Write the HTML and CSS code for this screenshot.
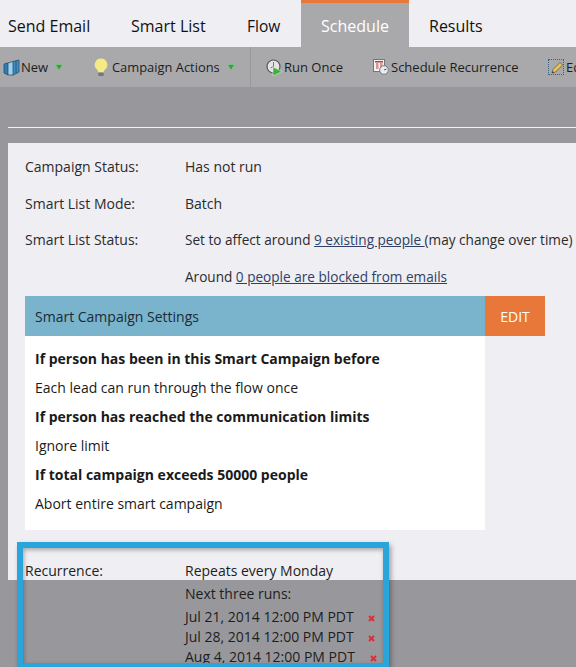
FILE: index.html
```html
<!DOCTYPE html>
<html lang="en">
<head>
    <meta charset="UTF-8">
    <title>Schedule</title>
    <link rel="stylesheet" href="styles.css">
</head>
<body>
    <div class="tabs">
        <div class="tab tab-email">Send Email</div>
        <div class="tab tab-list">Smart List</div>
        <div class="tab tab-flow">Flow</div>
        <div class="tab tab-active">Schedule</div>
        <div class="tab tab-results">Results</div>
    </div>
    <div class="toolbar">
        <div class="tool tool-new">
            <svg width="17" height="17" viewBox="0 0 17 17"><path d="M1 5l4-1v12l-4-2z" fill="#2f7fb5"/><path d="M5 4l5-1.500v13.500h-5z" fill="#a5d0ea"/><path d="M10 2.500l6-1.500v12l-6 3z" fill="#3f8fc4"/><path d="M1 5l4-1 5-1.500 6-1.500v12l-6 3h-5l-4-2zM5 4v12M10 2.500v14M13 2v12.500" stroke="#1c4463" stroke-width=".7" fill="none"/></svg>
            <span>New</span>
            <svg class="arrow" width="8" height="7" viewBox="0 0 8 7"><path d="M.5.5h7l-3.500 6z" fill="#3f9a45" stroke="#86c98a" stroke-width=".7"/></svg>
        </div>
        <div class="tool tool-actions">
            <svg width="14" height="19" viewBox="0 0 14 19"><path d="M7 .5a6.300 6.300 0 0 0-3.800 11.300c1 .9 1 2 1 2.700h5.600c0-.7 0-1.800 1-2.700A6.300 6.300 0 0 0 7 .5z" fill="#f6ea84"/><rect x="4.200" y="14.500" width="5.600" height="3.500" rx="1" fill="#77777a"/></svg>
            <span>Campaign Actions</span>
            <svg class="arrow" width="8" height="7" viewBox="0 0 8 7"><path d="M.5.5h7l-3.500 6z" fill="#3f9a45" stroke="#86c98a" stroke-width=".7"/></svg>
        </div>
        <div class="tool tool-run">
            <svg width="17" height="17" viewBox="0 0 17 17"><circle cx="7.500" cy="7.500" r="6.500" fill="#e4e4e4" stroke="#58585c" stroke-width="1.200"/><path d="M7.500 3v4.500l-3 1.500" stroke="#77777a" fill="none"/><path d="M7 8l9 4.500-9 4.500z" fill="#3eb03a" stroke="#e8f4e4" stroke-width=".5"/></svg>
            <span>Run Once</span>
        </div>
        <div class="tool tool-recur">
            <svg width="16" height="16" viewBox="0 0 16 16"><rect x=".5" y=".5" width="11" height="12" fill="#f1f1f1" stroke="#77777a"/><rect x="2" y="2" width="8" height="1.500" fill="#c23b3b"/><path d="M3 5h2.500M3 7h2.500M3 9h2.500M7 5h2.500M7 7h2.500M7 9h2.500" stroke="#c23b3b" stroke-width="1.200"/><circle cx="11" cy="11" r="4.300" fill="#ececee" stroke="#6f7f8f"/><path d="M11 11l2.500-1" stroke="#555"/></svg>
            <span>Schedule Recurrence</span>
        </div>
        <div class="tool tool-edit">
            <div class="focus-box">
                <svg class="pencil" width="13" height="13" viewBox="0 0 13 13"><path d="M1 12l1-3.500 7-7 2.500 2.500-7 7z" fill="#e8c45a" stroke="#5a5030" stroke-width=".7"/><path d="M1 12l.6-2 1.400 1.400z" fill="#333"/></svg>
            </div>
            <span>Edit</span>
        </div>
    </div>
    <div class="band">
        <div class="rule"></div>
    </div>
    <div class="panel">
        <div class="row"><div class="label">Campaign Status:</div><div>Has not run</div></div>
        <div class="row"><div class="label">Smart List Mode:</div><div>Batch</div></div>
        <div class="row"><div class="label">Smart List Status:</div><div class="tight">Set to affect around <a href="#">9 existing people </a>(may change over time)</div></div>
        <div class="row row-last"><div class="label"></div><div class="tight">Around <a href="#">0 people are blocked from emails</a></div></div>
        <div class="settings-head">
            <div class="settings-title">Smart Campaign Settings</div>
            <div class="edit-btn">EDIT</div>
        </div>
        <div class="settings-body">
            <p class="strong">If person has been in this Smart Campaign before</p>
            <p>Each lead can run through the flow once</p>
            <p class="strong">If person has reached the communication limits</p>
            <p>Ignore limit</p>
            <p class="strong">If total campaign exceeds 50000 people</p>
            <p>Abort entire smart campaign</p>
        </div>
        <div class="recurrence">
            <div class="label">Recurrence:</div>
            <div class="recur-info">
                <div class="recur-line">Repeats every Monday</div>
                <div class="recur-line">Next three runs:</div>
                <div class="run run-first">Jul 21, 2014 12:00 PM PDT <svg class="del" width="7" height="7" viewBox="0 0 7 7"><path d="M1 1l5 5M6 1l-5 5" stroke="#d5303c" stroke-width="2"/></svg></div>
                <div class="run">Jul 28, 2014 12:00 PM PDT <svg class="del" width="7" height="7" viewBox="0 0 7 7"><path d="M1 1l5 5M6 1l-5 5" stroke="#d5303c" stroke-width="2"/></svg></div>
                <div class="run">Aug 4, 2014 12:00 PM PDT <svg class="del" width="7" height="7" viewBox="0 0 7 7"><path d="M1 1l5 5M6 1l-5 5" stroke="#d5303c" stroke-width="2"/></svg></div>
            </div>
        </div>
    </div>
    <div class="highlight"></div>
</body>
</html>
```

FILE: styles.css
```css
html, body{
    margin: 0;
    padding: 0;
}
body{
    position: relative;
    width: 576px;
    height: 667px;
    overflow: hidden;
    background-color: #98989c;
    font-family: "Open Sans", Arial, sans-serif;
    font-size: 14px;
    color: #2b2b2d;
}
.tabs{
    display: flex;
    height: 47px;
    background-color: #eeeef3;
    color: #111;
    font-size: 16px;
}
.tab{
    padding-top: 15px;
    line-height: 22px;
    box-sizing: border-box;
    white-space: nowrap;
}
.tab-email{
    margin-left: 8px;
    width: 123px;
}
.tab-list{
    width: 116px;
}
.tab-flow{
    width: 54px;
    font-size: 15.500px;
}
.tab-active{
    width: 108px;
    height: 47px;
    padding-top: 12px;
    border-top: 3px solid #e8783a;
    background-color: #a9a9ac;
    color: #fff;
    text-align: center;
}
.tab-results{
    margin-left: 20px;
}
.toolbar{
    display: flex;
    align-items: center;
    height: 40px;
    background-color: #a9a9ac;
    white-space: nowrap;
    color: #1d1d20;
    font-size: 13px;
}
.tool{
    display: flex;
    align-items: center;
    flex: none;
}
.tool-new{
    margin-left: 3px;
    width: 91px;
    gap: 1px;
}
.tool-new .arrow{
    margin-left: 6px;
}
.tool-actions{
    width: 156px;
    height: 40px;
    gap: 4px;
    border-right: 1px solid #98989c;
}
.tool-actions span{
    font-size: 12.900px;
}
.tool-actions .arrow{
    margin-left: 3px;
}
.tool-run{
    margin-left: 15px;
    width: 107px;
    gap: 1px;
}
.tool-recur{
    width: 175px;
    gap: 2px;
}
.tool-edit{
    gap: 2px;
}
.focus-box{
    display: flex;
    align-items: center;
    justify-content: center;
    width: 14px;
    height: 14px;
    border: 1px dotted #35607f;
}
.pencil{
    flex: none;
    margin: 0 -1px 0 1px;
}
.band{
    height: 56px;
    padding-top: 40px;
    box-sizing: border-box;
}
.rule{
    margin-left: 8px;
    height: 1px;
    background-color: #f2f2f5;
}
.panel{
    height: 437px;
    margin-left: 8px;
    padding: 14px 0 0 17px;
    box-sizing: border-box;
    background-color: #eeeef3;
}
.row{
    display: flex;
    height: 36.500px;
    line-height: 19px;
    white-space: nowrap;
}
.row-last{
    height: 29.500px;
}
.label{
    flex: none;
    width: 160px;
}
.tight{
    font-size: 13.600px;
}
a{
    color: #2f3f66;
    text-decoration: underline;
}
.settings-head{
    display: flex;
    height: 40px;
}
.settings-title{
    width: 460px;
    padding-left: 10px;
    box-sizing: border-box;
    line-height: 41px;
    background-color: #7ab3cc;
    color: #1c2a33;
}
.edit-btn{
    width: 60px;
    line-height: 41px;
    text-align: center;
    background-color: #e8783a;
    color: #fff;
}
.settings-body{
    width: 460px;
    height: 194px;
    padding: 8px 10px 0;
    box-sizing: border-box;
    background-color: #fff;
    color: #1a1a1a;
}
.settings-body p{
    margin: 0;
    line-height: 29px;
}
.strong{
    font-weight: 700;
}
.recurrence{
    display: flex;
    margin-top: 31px;
    line-height: 19px;
    color: #1d1d20;
    white-space: nowrap;
}
.recur-line{
    margin-bottom: 4px;
}
.run{
    line-height: 20px;
}
.run-first{
    margin-top: 4px;
}
.del{
    margin-left: 11px;
}
.highlight{
    position: absolute;
    left: 17px;
    top: 542px;
    width: 372px;
    height: 125px;
    box-sizing: border-box;
    border: 6px solid #2aa5dc;
    border-bottom-width: 4px;
    box-shadow: 2px 3px 5px rgba(0,0,0,0.35), inset 1px 2px 4px rgba(0,0,0,0.3);
}
```
